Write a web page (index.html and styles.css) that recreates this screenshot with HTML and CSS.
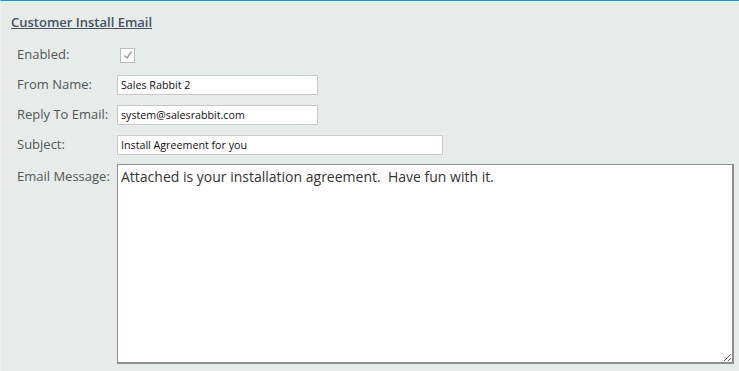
FILE: index.html
```html
<!DOCTYPE html>
<html lang="en">
<head>
    <meta charset="UTF-8">
    <meta name="viewport" content="width=device-width, initial-scale=1.0">
    <title>Customer Install Email</title>
    <link rel="stylesheet" href="styles.css">
</head>
<body>
    <div class="panel">
        <h3 class="panel-title">Customer Install Email</h3>
        <div class="form">
            <label class="label">Enabled:</label>
            <div class="field">
                <span class="check">
                    <svg width="12" height="12" viewBox="0 0 12 12"><path d="M2.5 6.5 L5 9 L9.5 2.5" fill="none" stroke="#9a9a9a" stroke-width="1.4"/></svg>
                </span>
            </div>

            <label class="label">From Name:</label>
            <div class="field"><input type="text" class="input" value="Sales Rabbit 2"></div>

            <label class="label">Reply To Email:</label>
            <div class="field"><input type="text" class="input" value="system@salesrabbit.com"></div>

            <label class="label">Subject:</label>
            <div class="field"><input type="text" class="input wide" value="Install Agreement for you"></div>

            <label class="label top">Email Message:</label>
            <div class="field"><textarea class="message">Attached is your installation agreement.  Have fun with it.</textarea></div>
        </div>
    </div>
</body>
</html>
```

FILE: styles.css
```css
body {
    margin: 0;
    font-family: "Open Sans", "Liberation Sans", sans-serif;
    background-color: #e7ecea;
}
.panel {
    border-top: 1px solid #0a9ed0;
    border-left: 1px solid #eef2f1;
    height: 370px;
    padding: 0 5px 0 10px;
}
.panel-title {
    margin: 0;
    padding-top: 12px;
    font-size: 13px;
    font-weight: 600;
    color: #46525e;
    text-decoration: underline;
    line-height: 18px;
}
.form {
    display: grid;
    grid-template-columns: 100px 1fr;
    row-gap: 10px;
    margin-top: 14px;
    padding-left: 6px;
}
.label {
    font-size: 13px;
    color: #555;
    height: 20px;
    line-height: 18px;
}
.label.top {
    padding-top: 2px;
}
.field {
    display: flex;
    align-items: center;
    min-height: 20px;
}
.check {
    box-sizing: border-box;
    display: flex;
    align-items: center;
    justify-content: center;
    width: 15px;
    height: 15px;
    margin-left: 3px;
    border: 1px solid #bcbcbc;
    background: #fff;
}
.input {
    box-sizing: border-box;
    width: 201px;
    height: 20px;
    border: 1px solid #c8c8c8;
    padding: 0 3px;
    font-family: "Open Sans", sans-serif;
    font-size: 10.7px;
    color: #111;
    background: #fff;
    outline: none;
}
.input.wide {
    width: 326px;
}
.message {
    box-sizing: border-box;
    width: 100%;
    height: 200px;
    margin-top: -1px;
    border: 1px solid #8e8e8e;
    border-right-width: 2px;
    border-bottom-width: 2px;
    padding: 2px 3px;
    font-family: "Open Sans", sans-serif;
    font-size: 14px;
    color: #333;
    background: #fff;
    outline: none;
}
```
